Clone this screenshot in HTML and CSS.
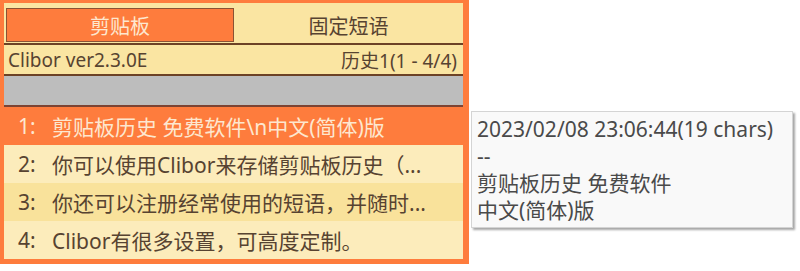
FILE: index.html
```html
<!DOCTYPE html>
<html lang="zh-CN">
<head>
    <meta charset="UTF-8">
    <meta name="viewport" content="width=device-width, initial-scale=1.0">
    <title>Clibor</title>
    <link rel="stylesheet" href="styles.css">
</head>
<body>
    <div class="window">
        <div class="tabs">
            <div class="tab active">剪贴板</div>
            <div class="tab">固定短语</div>
        </div>
        <div class="info">
            <span>Clibor ver2.3.0E</span>
            <span>历史1(1 - 4/4)</span>
        </div>
        <div class="search"></div>
        <ul class="list">
            <li class="item selected"><span class="num">1:</span>剪贴板历史 免费软件\n中文(简体)版</li>
            <li class="item"><span class="num">2:</span>你可以使用Clibor来存储剪贴板历史（...</li>
            <li class="item alt"><span class="num">3:</span>你还可以注册经常使用的短语，并随时...</li>
            <li class="item"><span class="num">4:</span>Clibor有很多设置，可高度定制。</li>
        </ul>
    </div>

    <div class="tooltip">
        <div>2023/02/08 23:06:44(19 chars)</div>
        <div>--</div>
        <div>剪贴板历史 免费软件</div>
        <div>中文(简体)版</div>
    </div>
</body>
</html>
```

FILE: styles.css
```css
body {
    margin: 0;
    background: #fff;
    font-family: "Noto Sans", "Noto Sans CJK SC", sans-serif;
    color: #574331;
}
.window {
    width: 469px;
    box-sizing: border-box;
    border-style: solid;
    border-color: #fe7c3d;
    border-width: 3px 6px 5px 4px;
    background: #fae5a2;
}
.tabs {
    display: flex;
    height: 42px;
    box-sizing: border-box;
    padding: 5px 0 0 2px;
    border-bottom: 2px solid #6c4226;
}
.tab {
    flex: 1;
    display: flex;
    align-items: center;
    justify-content: center;
    font-size: 20px;
    height: 34px;
    box-sizing: border-box;
}
.tab.active {
    flex: 0 0 228px;
    background: #fe7c3d;
    border: 1px solid #8a5234;
    color: #fde7cf;
}
.info {
    display: flex;
    justify-content: space-between;
    align-items: center;
    height: 29px;
    padding: 0 6px 0 4px;
    font-size: 19px;
    border-bottom: 2px solid #6c4226;
}
.search {
    height: 29px;
    background: #bdbdbd;
    border-bottom: 2px solid #7c4434;
}
.list {
    list-style: none;
    margin: 0;
    padding: 0;
}
.item {
    display: flex;
    align-items: center;
    height: 38px;
    font-size: 21px;
    background: #fcecbb;
    white-space: nowrap;
}
.item.alt {
    background: #f9e29b;
}
.item.selected {
    background: #fe7c3d;
    color: #fde7cf;
}
.num {
    width: 48px;
    padding-left: 14px;
    box-sizing: border-box;
}
.tooltip {
    position: absolute;
    left: 471px;
    top: 111px;
    width: 322px;
    height: 117px;
    box-sizing: border-box;
    padding: 4px 0 0 5px;
    background: #f9f9f9;
    border: 1px solid #d4d4d4;
    box-shadow: 2px 2px 2px rgba(0, 0, 0, 0.35);
    font-size: 21px;
    line-height: 27px;
    color: #4a4a4a;
    white-space: nowrap;
}
```
